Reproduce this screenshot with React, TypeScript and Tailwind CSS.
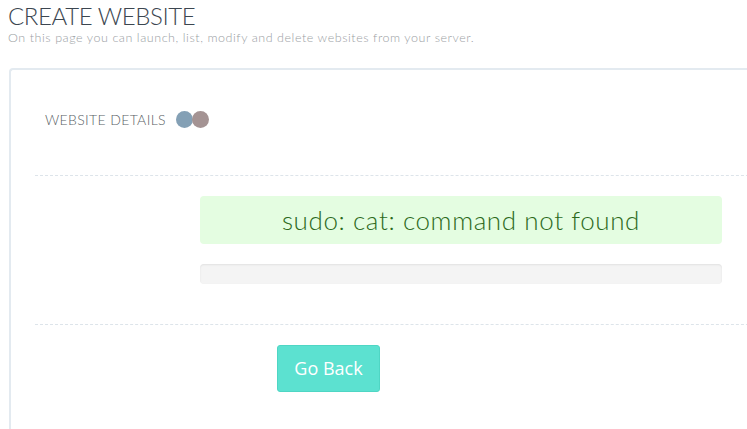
import React from "react";

const raleway = { fontFamily: "Lato, 'Noto Sans', sans-serif" };

function Dots() {
  return (
    <span className="ml-[10px] inline-flex items-center">
      <span className="h-[17px] w-[17px] rounded-full bg-[#84a0b5]" />
      <span className="-ml-[1px] h-[17px] w-[17px] rounded-full bg-[#a49393]" />
    </span>
  );
}

export default function App() {
  return (
    <div className="h-[429px] w-[747px] overflow-hidden bg-white" style={raleway}>
      <div className="px-[8px] pt-[1px]">
        <h1 className="text-[24px] font-light leading-[30px] tracking-[-0.4px] text-[#3c4650]">CREATE WEBSITE</h1>
        <p className="text-[12.5px] font-light leading-[14px] tracking-[0.56px] text-[#9a9ea3]">
          On this page you can launch, list, modify and delete websites from your server.
        </p>
      </div>

      <div className="ml-[9px] mt-[23px] w-[780px] rounded-tl-[4px] border-l-2 border-t-2 border-[#e3eaf0] pl-[24px] pt-[39px]">
        <div className="flex items-center pl-[10px]">
          <span className="text-[14px] font-light tracking-[0.35px] text-[#5a5f66]">WEBSITE DETAILS</span>
          <Dots />
        </div>

        <div className="mt-[45px] border-t border-dashed border-[#dde4ea]" />

        <div className="flex flex-col pl-[165px] pr-[58px] pt-[20px]">
          <div className="flex h-[48px] w-[522px] items-center justify-center rounded-[4px] bg-[#e4fde1]">
            <span className="text-[26px] font-light tracking-[0.6px] text-[#2d6a1c]">sudo: cat: command not found</span>
          </div>
          <div className="mt-[20px] h-[20px] w-[522px] rounded-[4px] bg-[#f4f4f4] shadow-[inset_0_1px_2px_rgba(0,0,0,0.08)]" />
        </div>

        <div className="mt-[40px] border-t border-dashed border-[#dde4ea]" />

        <div className="pl-[242px] pt-[20px]">
          <button
            className="h-[47px] w-[103px] rounded-[3px] border border-[#4fd6c4] bg-[#5ce1d0] text-[18px] text-white"
            style={{ fontFamily: "'Open Sans', sans-serif" }}
          >
            Go Back
          </button>
        </div>
        <div className="h-[60px]" />
      </div>
    </div>
  );
}
